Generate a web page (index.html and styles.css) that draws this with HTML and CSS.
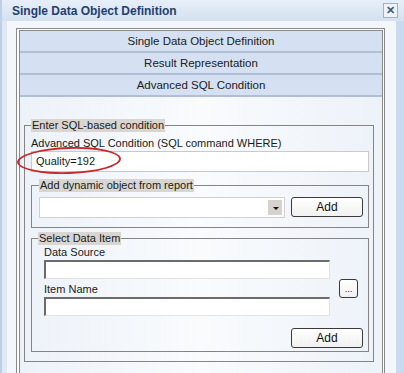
FILE: index.html
```html
<!DOCTYPE html>
<html lang="en">
<head>
    <meta charset="UTF-8">
    <title>Single Data Object Definition</title>
    <link rel="stylesheet" href="styles.css">
</head>
<body>
    <div class="window">
        <div class="titlebar">
            <span class="title">Single Data Object Definition</span>
            <span class="close">&#x2715;</span>
        </div>
        <div class="frame">
            <div class="panel">
                <div class="panel-inner">
                    <div class="tab">Single Data Object Definition</div>
                    <div class="tab">Result Representation</div>
                    <div class="tab">Advanced SQL Condition</div>

                    <fieldset class="group group-sql">
                        <legend>Enter SQL-based condition</legend>
                        <div class="label">Advanced SQL Condition (SQL command WHERE)</div>
                        <div class="textbox flat">Quality=192</div>

                        <fieldset class="group group-dynamic">
                            <legend>Add dynamic object from report</legend>
                            <div class="row">
                                <div class="combo"><span class="combo-arrow"></span></div>
                                <button class="btn btn-add">Add</button>
                            </div>
                        </fieldset>

                        <fieldset class="group group-item">
                            <legend>Select Data Item</legend>
                            <div class="item-grid">
                                <div class="label">Data Source</div>
                                <div class="textbox sunken"></div>
                                <button class="btn btn-browse">...</button>
                                <div class="label label-gap">Item Name</div>
                                <div class="textbox sunken"></div>
                                <button class="btn btn-add btn-bottom">Add</button>
                            </div>
                        </fieldset>
                    </fieldset>
                </div>
            </div>
        </div>
        <div class="highlight"></div>
    </div>
</body>
</html>
```

FILE: styles.css
```css
body {
    margin: 0;
    padding: 0;
    font-family: 'Liberation Sans', Arial, sans-serif;
    font-size: 11px;
    color: #1a1a1a;
}

.window {
    position: relative;
    width: 404px;
    height: 373px;
    overflow: hidden;
    background: #e9eff8;
}

.titlebar {
    height: 21px;
    display: flex;
    align-items: center;
    justify-content: space-between;
    padding: 0 6px 0 10px;
    background: linear-gradient(#e6eef8, #d5e1f1);
    border-left: 2px solid #bccfe6;
    box-sizing: border-box;
}

.title {
    font-weight: bold;
    font-size: 12px;
    color: #1f3f6f;
}

.close {
    width: 13px;
    height: 13px;
    border: 1px solid #9fb2cc;
    background: #eef3fa;
    color: #3d5a80;
    font-size: 11px;
    font-weight: bold;
    line-height: 13px;
    text-align: center;
}

.frame {
    height: 352px;
    padding: 7px 11px 0 14px;
    border-left: 2px solid #bccfe6;
    border-right: 8px solid #c9d9ee;
    background: linear-gradient(90deg, #dfe8f4 0, #dfe8f4 5px, #ffffff 5px, #f3f6fb 6px);
}

.panel {
    height: 100%;
    border: 1px solid #8a8a8a;
    border-bottom: none;
    padding: 1px 1px 0 2px;
    background: #fbfcfe;
}

.panel-inner {
    height: 100%;
    border: 1px solid #8a8a8a;
    border-bottom: none;
    background: linear-gradient(90deg, #edf2f9, #f9fbfd 50%, #edf2f9);
}

.tab {
    height: 20px;
    line-height: 20px;
    text-align: center;
    font-size: 11.5px;
    color: #202020;
    background: #d5e1f2;
    border-bottom: 2px solid #b0bfd5;
}

.group {
    margin: 0;
    border: 1px solid #858585;
    min-width: 0;
}

.group legend {
    padding: 0 1px;
    background: #d9d6d1;
    line-height: 13px;
    font-size: 11px;
}

.group-sql {
    margin: 22px 8px 0 4px;
    padding: 4px 4px 9px 6px;
}

.label {
    height: 14px;
    line-height: 14px;
    margin-bottom: 1px;
}

.textbox {
    height: 21px;
    box-sizing: border-box;
    background: #fff;
    padding-left: 4px;
    line-height: 19px;
}

.flat {
    border: 1px solid #c9c9c9;
}

.sunken {
    height: 19px;
    border-top: 2px solid #6c6c6c;
    border-left: 2px solid #6c6c6c;
    border-right: 1px solid #e4e4e4;
    border-bottom: 1px solid #e4e4e4;
}

.group-dynamic {
    margin: 7px 0 0 0;
    padding: 5px 3px 9px 7px;
}

.row {
    display: flex;
    align-items: center;
    gap: 6px;
}

.combo {
    width: 246px;
    height: 21px;
    box-sizing: border-box;
    border: 1px solid #d0d0d0;
    background: #fff;
    display: flex;
    justify-content: flex-end;
    padding: 2px;
}

.combo-arrow {
    width: 14px;
    background: #d6d3ce;
    position: relative;
}

.combo-arrow::after {
    content: "";
    position: absolute;
    left: 5px;
    top: 7px;
    border-left: 3px solid transparent;
    border-right: 3px solid transparent;
    border-top: 3px solid #111;
}

.btn {
    font-family: 'Liberation Sans', Arial, sans-serif;
    font-size: 12px;
    color: #111;
    background: linear-gradient(#ffffff, #f1f1f1);
    border: 1px solid #3a3a3a;
    border-radius: 3px;
    padding: 0;
}

.btn-add {
    width: 72px;
    height: 20px;
    margin-top: -1px;
}

.group-item {
    margin: 4px 0 0 0;
    padding: 0 3px 3px 6px;
}

.item-grid {
    margin-left: 6px;
    display: grid;
    grid-template-columns: 286px 19px;
    column-gap: 9px;
}

.item-grid .label {
    grid-column: 1;
}

.item-grid .sunken {
    grid-column: 1;
}

.label-gap {
    margin-top: 3px;
}

.btn-browse {
    grid-column: 2;
    grid-row: 2 / 5;
    align-self: center;
    width: 19px;
    height: 19px;
    font-size: 9px;
    line-height: 12px;
    margin-top: 1px;
}

.btn-bottom {
    grid-column: 1 / 3;
    justify-self: end;
    margin: 12px -5px 0 0;
}

.highlight {
    position: absolute;
    left: 17px;
    top: 147px;
    width: 100px;
    height: 23px;
    border: 2.5px solid #c9282c;
    border-radius: 50%;
    transform: rotate(-2deg);
}
```
